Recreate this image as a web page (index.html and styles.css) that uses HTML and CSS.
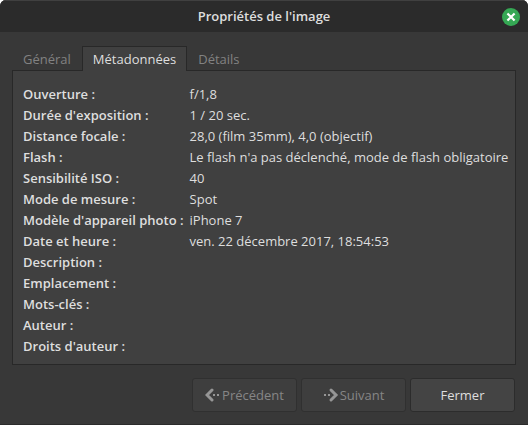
FILE: index.html
```html
<!DOCTYPE html>
<html lang="fr">

<head>
    <meta charset="UTF-8">
    <meta name="viewport" content="width=device-width, initial-scale=1.0">
    <title>Propriétés de l'image</title>
    <link rel="stylesheet" href="styles.css">
</head>

<body>
    <div class="dialog">
        <header class="titlebar">
            <h1>Propriétés de l'image</h1>
            <button class="close-btn" type="button" aria-label="Fermer la fenêtre">
                <svg width="18" height="18" viewBox="0 0 18 18">
                    <circle cx="9" cy="9" r="9" fill="#35a854" />
                    <path d="M6.2 6.2l5.6 5.6M11.8 6.2l-5.6 5.6" stroke="#fff" stroke-width="2.2" stroke-linecap="square" />
                </svg>
            </button>
        </header>

        <main class="content">
            <div class="tabs" role="tablist">
                <button class="tab" type="button" role="tab" aria-selected="false">Général</button>
                <button class="tab active" type="button" role="tab" aria-selected="true" id="tab-meta" aria-controls="panel-meta">Métadonnées</button>
                <button class="tab" type="button" role="tab" aria-selected="false">Détails</button>
            </div>

            <div class="panel" role="tabpanel" id="panel-meta" aria-labelledby="tab-meta">
                <table class="metadata">
                    <tr><th scope="row">Ouverture :</th><td>f/1,8</td></tr>
                    <tr><th scope="row">Durée d'exposition :</th><td>1 / 20 sec.</td></tr>
                    <tr><th scope="row">Distance focale :</th><td>28,0 (film 35mm), 4,0 (objectif)</td></tr>
                    <tr><th scope="row">Flash :</th><td>Le flash n'a pas déclenché, mode de flash obligatoire</td></tr>
                    <tr><th scope="row">Sensibilité ISO :</th><td>40</td></tr>
                    <tr><th scope="row">Mode de mesure :</th><td>Spot</td></tr>
                    <tr><th scope="row">Modèle d'appareil photo :</th><td>iPhone 7</td></tr>
                    <tr><th scope="row">Date et heure :</th><td>ven. 22 décembre 2017, 18:54:53</td></tr>
                    <tr><th scope="row">Description :</th><td></td></tr>
                    <tr><th scope="row">Emplacement :</th><td></td></tr>
                    <tr><th scope="row">Mots-clés :</th><td></td></tr>
                    <tr><th scope="row">Auteur :</th><td></td></tr>
                    <tr><th scope="row">Droits d'auteur :</th><td></td></tr>
                </table>
            </div>

            <div class="actions">
                <button class="btn" type="button" disabled>
                    <svg class="arrow" width="16" height="16" viewBox="0 0 16 16">
                        <path d="M7 3L2 8L7 13" fill="none" stroke="currentColor" stroke-width="3" stroke-linecap="round" />
                        <path d="M8 7h2v2H8zM12 7h2v2h-2z" fill="currentColor" />
                    </svg>
                    Précédent
                </button>
                <button class="btn" type="button" disabled>
                    <svg class="arrow" width="16" height="16" viewBox="0 0 16 16">
                        <path d="M8 3L13 8L8 13" fill="none" stroke="currentColor" stroke-width="3" stroke-linecap="round" />
                        <path d="M5 7h2v2H5zM1 7h2v2H1z" fill="currentColor" />
                    </svg>
                    Suivant
                </button>
                <button class="btn" type="button">Fermer</button>
            </div>
        </main>
    </div>
</body>

</html>
```

FILE: styles.css
```css
* {
    margin: 0;
    padding: 0;
    box-sizing: border-box;
}

body {
    background-color: #fff;
    color: #dedede;
    font-family: "Open Sans", "Noto Sans", sans-serif;
    font-size: 13px;
    line-height: 21px;
}

button {
    font: inherit;
    color: inherit;
    border: none;
    background: none;
}

svg {
    display: block;
    flex: none;
}

.dialog {
    min-height: 100vh;
    background-color: #383838;
    border-bottom: 1px solid #2b2b2b;
    border-radius: 6px 6px 0 0;
    overflow: hidden;
}

.titlebar {
    display: grid;
    grid-template-columns: 18px 1fr 18px;
    align-items: center;
    height: 32px;
    padding: 0 8px;
    background-color: #2b2b2b;
    border-top: 1px solid #404040;
}

.titlebar h1 {
    grid-column: 2;
    font-size: 13px;
    font-weight: 600;
    text-align: center;
}

.content {
    padding: 14px 12px 12px;
}

.tabs {
    display: flex;
}

.tab {
    height: 24px;
    padding: 1px 10px 0;
    border: 1px solid transparent;
    border-bottom: none;
    color: #828282;
}

.tab.active {
    position: relative;
    margin-bottom: -1px;
    height: 25px;
    background-color: #404040;
    border-color: #282828;
    color: #dedede;
}

.panel {
    padding: 13px 0 7px 10px;
    background-color: #404040;
    border: 1px solid #282828;
}

.metadata {
    border-collapse: collapse;
}

.metadata th {
    padding-right: 6px;
    font-weight: 600;
    text-align: left;
    white-space: nowrap;
}

.actions {
    display: flex;
    justify-content: flex-end;
    gap: 4px;
    margin-top: 13px;
    padding-right: 1px;
}

.btn {
    display: flex;
    align-items: center;
    justify-content: center;
    gap: 1px;
    width: 105px;
    height: 34px;
    background-color: #444;
    border: 1px solid #2c2c2c;
    border-radius: 3px;
}

.btn:disabled {
    background-color: #3e3e3e;
    border-color: #303030;
    color: #868686;
}

.arrow {
    color: #969696;
}
```
